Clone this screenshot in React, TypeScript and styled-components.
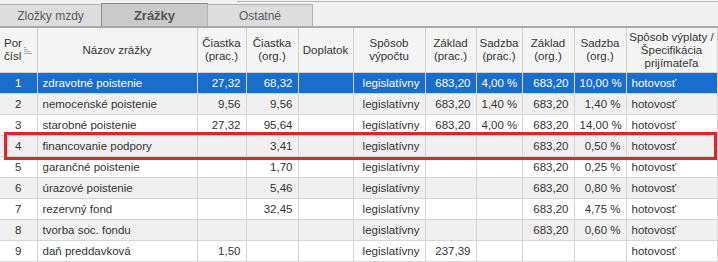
import styled, { createGlobalStyle } from 'styled-components';

const GlobalStyle = createGlobalStyle`
  html, body {
    margin: 0;
    padding: 0;
    background: #ffffff;
  }
  body {
    font-family: "Liberation Sans", Arial, sans-serif;
    font-size: 11.5px;
    color: #333333;
  }
`;

type Align = 'left' | 'right' | 'center';

interface Column {
  title: string[];
  width: number;
  align: Align;
}

const columns: Column[] = [
  { title: ['Por', 'čísl'], width: 37, align: 'center' },
  { title: ['Názov zrážky'], width: 160, align: 'left' },
  { title: ['Čiastka', '(prac.)'], width: 49, align: 'right' },
  { title: ['Čiastka', '(org.)'], width: 52, align: 'right' },
  { title: ['Doplatok'], width: 55, align: 'right' },
  { title: ['Spôsob', 'výpočtu'], width: 72, align: 'right' },
  { title: ['Základ', '(prac.)'], width: 51, align: 'right' },
  { title: ['Sadzba', '(prac.)'], width: 46, align: 'right' },
  { title: ['Základ', '(org.)'], width: 52, align: 'right' },
  { title: ['Sadzba', '(org.)'], width: 52, align: 'right' },
  { title: ['Spôsob výplaty /', 'Špecifikácia', 'prijímateľa'], width: 91, align: 'left' },
];

const rows: string[][] = [
  ['1', 'zdravotné poistenie', '27,32', '68,32', '', 'legislatívny', '683,20', '4,00 %', '683,20', '10,00 %', 'hotovosť'],
  ['2', 'nemocenské poistenie', '9,56', '9,56', '', 'legislatívny', '683,20', '1,40 %', '683,20', '1,40 %', 'hotovosť'],
  ['3', 'starobné poistenie', '27,32', '95,64', '', 'legislatívny', '683,20', '4,00 %', '683,20', '14,00 %', 'hotovosť'],
  ['4', 'financovanie podpory', '', '3,41', '', 'legislatívny', '', '', '683,20', '0,50 %', 'hotovosť'],
  ['5', 'garančné poistenie', '', '1,70', '', 'legislatívny', '', '', '683,20', '0,25 %', 'hotovosť'],
  ['6', 'úrazové poistenie', '', '5,46', '', 'legislatívny', '', '', '683,20', '0,80 %', 'hotovosť'],
  ['7', 'rezervný fond', '', '32,45', '', 'legislatívny', '', '', '683,20', '4,75 %', 'hotovosť'],
  ['8', 'tvorba soc. fondu', '', '', '', 'legislatívny', '', '', '683,20', '0,60 %', 'hotovosť'],
  ['9', 'daň preddavková', '1,50', '', '', 'legislatívny', '237,39', '', '', '', 'hotovosť'],
];

const tabs = ['Zložky mzdy', 'Zrážky', 'Ostatné'];

const Page = styled.div`
  width: 718px;
  height: 262px;
  overflow: hidden;
  background: #ffffff;
`;

const TabBar = styled.div`
  display: flex;
  align-items: flex-end;
  height: 26px;
  border-bottom: 2px solid #a9a9a9;
  background:
    linear-gradient(#b8b8b8, #b8b8b8) 237px 1px / calc(100% - 237px) 1px no-repeat,
    #f0f0f0;
`;

const Tab = styled.div<{ $active?: boolean }>`
  box-sizing: border-box;
  width: ${(p) => (p.$active ? 107 : 106)}px;
  height: ${(p) => (p.$active ? 23 : 22)}px;
  display: flex;
  align-items: center;
  justify-content: center;
  border: 1px solid ${(p) => (p.$active ? '#8c8c8c' : '#b4b4b4')};
  border-bottom: none;
  margin-left: -1px;
  background: ${(p) => (p.$active ? '#cacaca' : '#dddddd')};
  color: ${(p) => (p.$active ? '#555555' : '#5b5b66')};
  font-size: ${(p) => (p.$active ? 13 : 12)}px;
  font-weight: ${(p) => (p.$active ? 'bold' : 'normal')};
  &:first-child {
    margin-left: 0;
    width: 102px;
    border-left: none;
  }
`;

const TableWrap = styled.div`
  position: relative;
`;

const Grid = styled.table`
  width: 717px;
  border-collapse: collapse;
  table-layout: fixed;
`;

const HeadCell = styled.th<{ $first?: boolean }>`
  height: 44px;
  padding: 0 1px;
  background: #f4f4f4;
  border: 1px solid #d2d2d2;
  border-top: none;
  font-weight: normal;
  color: #333333;
  line-height: 13px;
  white-space: nowrap;
  overflow: hidden;
  text-align: ${(p) => (p.$first ? 'left' : 'center')};
  vertical-align: middle;
  &:first-child {
    border-left: none;
  }
`;

const HeadInner = styled.div`
  display: flex;
  align-items: center;
  justify-content: space-between;
  padding: 0 3px 0 3px;
`;

const Row = styled.tr<{ $selected?: boolean; $even?: boolean }>`
  height: 21px;
  background: ${(p) => (p.$selected ? '#1b6dcd' : p.$even ? '#f0f0f0' : '#ffffff')};
  color: ${(p) => (p.$selected ? '#ffffff' : '#333333')};
`;

const Cell = styled.td<{ $align: Align }>`
  padding: 0 5px 0 5px;
  border: 1px solid #d6d6d6;
  text-align: ${(p) => p.$align};
  white-space: nowrap;
  overflow: hidden;
  &:first-child {
    border-left: none;
  }
`;

const Highlight = styled.div`
  position: absolute;
  left: 4px;
  top: 104px;
  width: 713px;
  height: 28px;
  box-sizing: border-box;
  border: 3px solid #e3222b;
  pointer-events: none;
`;

const SortIcon = () => (
  <svg width="9" height="9" viewBox="0 0 9 9">
    <g stroke="#9bb89b" strokeWidth="1">
      <line x1="0" y1="1.5" x2="2" y2="1.5" />
      <line x1="0" y1="3.5" x2="4" y2="3.5" />
      <line x1="0" y1="5.5" x2="6" y2="5.5" />
      <line x1="0" y1="7.5" x2="8" y2="7.5" />
    </g>
  </svg>
);

export default function App() {
  return (
    <>
      <GlobalStyle />
      <Page>
        <TabBar>
          {tabs.map((t) => (
            <Tab key={t} $active={t === 'Zrážky'}>
              {t}
            </Tab>
          ))}
        </TabBar>
        <TableWrap>
          <Grid>
            <colgroup>
              {columns.map((c, i) => (
                <col key={i} style={{ width: c.width }} />
              ))}
            </colgroup>
            <thead>
              <tr>
                {columns.map((c, i) => (
                  <HeadCell key={i} $first={i === 0}>
                    {i === 0 ? (
                      <HeadInner>
                        <span>
                          {c.title[0]}
                          <br />
                          {c.title[1]}
                        </span>
                        <SortIcon />
                      </HeadInner>
                    ) : (
                      c.title.map((line, j) => (
                        <span key={j}>
                          {j > 0 && <br />}
                          {line}
                        </span>
                      ))
                    )}
                  </HeadCell>
                ))}
              </tr>
            </thead>
            <tbody>
              {rows.map((r, i) => (
                <Row key={i} $selected={i === 0} $even={i % 2 === 1}>
                  {r.map((v, j) => (
                    <Cell key={j} $align={columns[j].align}>
                      {v}
                    </Cell>
                  ))}
                </Row>
              ))}
            </tbody>
          </Grid>
          <Highlight />
        </TableWrap>
      </Page>
    </>
  );
}
